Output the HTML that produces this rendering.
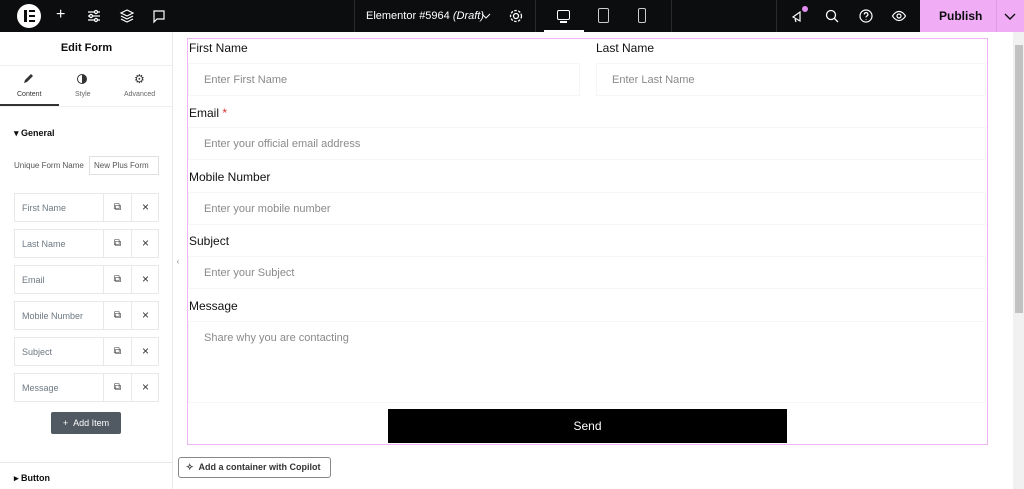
<!DOCTYPE html><html><head><style>
*{box-sizing:border-box;margin:0;padding:0}
body{width:1024px;height:489px;overflow:hidden;font-family:"Liberation Sans",sans-serif;background:#fff;position:relative}
.top{position:absolute;left:0;top:0;width:1024px;height:32px;background:#0c0d0e;color:#fff}
.ab{position:absolute}
.side{position:absolute;left:0;top:32px;width:173px;height:457px;background:#fff;border-right:1px solid #e6e8ea}
.row{position:absolute;left:14px;width:145px;height:29px;border:1px solid #e6e8ea;font-size:9px;color:#6d7882}
.row span{position:absolute;left:7px;top:9px}
.row .c1{position:absolute;left:88px;top:0;width:28px;height:27px;border-left:1px solid #e6e8ea;text-align:center;line-height:27px;font-size:10px;color:#333}
.row .c2{position:absolute;left:116px;top:0;width:28px;height:27px;border-left:1px solid #e6e8ea;text-align:center;line-height:27px;font-size:12px;color:#333}
.lbl{position:absolute;font-size:12px;color:#111}
.inp{position:absolute;height:33px;border:1px solid #f6f6f6;font-size:11px;color:#8a8a8a;padding:10px 0 0 15px}
</style></head><body>
<div class="top">
<div class="ab" style="left:17px;top:4px;width:24px;height:24px;border-radius:50%;background:#fff"></div>
<div class="ab" style="left:24px;top:10px;width:3px;height:12px;background:#0c0d0e"></div>
<div class="ab" style="left:29px;top:10px;width:6px;height:2px;background:#0c0d0e;box-shadow:0 5px 0 #0c0d0e,0 10px 0 #0c0d0e"></div>
<div class="ab" style="left:56px;top:6px;font-size:16px">+</div>
<svg class="ab" style="left:86px;top:8px" width="16" height="16" fill="none" stroke="#fff" stroke-width="1.2"><path d="M2 4h12M2 8h12M2 12h12"/><circle cx="10" cy="4" r="1.5" fill="#0c0d0e"/><circle cx="5" cy="8" r="1.5" fill="#0c0d0e"/><circle cx="10" cy="12" r="1.5" fill="#0c0d0e"/></svg>
<svg class="ab" style="left:119px;top:8px" width="16" height="16" fill="none" stroke="#fff" stroke-width="1.2"><path d="M8 2l6 3-6 3-6-3zM2 8l6 3 6-3M2 11l6 3 6-3"/></svg>
<svg class="ab" style="left:151px;top:8px" width="16" height="16" fill="none" stroke="#fff" stroke-width="1.2"><path d="M3 3h10v8H6l-3 3z"/></svg>
<div class="ab" style="left:354px;top:0;width:1px;height:32px;background:#2a2b2c"></div>
<div class="ab" style="left:366px;top:10px;font-size:11px">Elementor #5964 <i>(Draft)</i></div>
<svg class="ab" style="left:481px;top:11px" width="10" height="10" fill="none" stroke="#fff" stroke-width="1"><path d="M1 3l4 4 4-4"/></svg>
<svg class="ab" style="left:508px;top:8px" width="16" height="16" fill="none" stroke="#fff" stroke-width="1.3"><circle cx="8" cy="8" r="2.5"/><circle cx="8" cy="8" r="5.5" stroke-dasharray="2.5 1.5"/></svg>
<div class="ab" style="left:535px;top:0;width:1px;height:32px;background:#2a2b2c"></div>
<div class="ab" style="left:544px;top:30px;width:40px;height:2px;background:#fff"></div>
<div class="ab" style="left:557px;top:10px;width:13px;height:10px;border:1.3px solid #fff;border-radius:2px"></div>
<div class="ab" style="left:560px;top:21px;width:7px;height:2px;background:#fff"></div>
<div class="ab" style="left:598px;top:8px;width:11px;height:15px;border:1.3px solid #ccc;border-radius:2px"></div>
<div class="ab" style="left:638px;top:8px;width:8px;height:15px;border:1.3px solid #ccc;border-radius:2px"></div>
<div class="ab" style="left:671px;top:0;width:1px;height:32px;background:#2a2b2c"></div>
<div class="ab" style="left:776px;top:0;width:1px;height:32px;background:#2a2b2c"></div>
<svg class="ab" style="left:790px;top:8px" width="16" height="16" fill="none" stroke="#fff" stroke-width="1.2"><path d="M3 9l7-5v9zM5 11l1 3"/></svg>
<div class="ab" style="left:802px;top:6px;width:6px;height:6px;border-radius:50%;background:#e08cf0"></div>
<svg class="ab" style="left:824px;top:8px" width="16" height="16" fill="none" stroke="#fff" stroke-width="1.3"><circle cx="7" cy="7" r="4.5"/><path d="M10.5 10.5l3.5 3.5"/></svg>
<svg class="ab" style="left:858px;top:8px" width="16" height="16" fill="none" stroke="#fff" stroke-width="1.2"><circle cx="8" cy="8" r="6"/><path d="M6.3 6.5a1.8 1.8 0 1 1 2.4 1.6c-.6.3-.7.6-.7 1.3M8 11v.6"/></svg>
<svg class="ab" style="left:891px;top:8px" width="16" height="16" fill="none" stroke="#fff" stroke-width="1.2"><path d="M1.5 8s2.5-4.5 6.5-4.5S14.5 8 14.5 8 12 12.5 8 12.5 1.5 8 1.5 8z"/><circle cx="8" cy="8" r="2"/></svg>
<div class="ab" style="left:920px;top:0;width:104px;height:32px;background:#f0acf5"></div>
<div class="ab" style="left:939px;top:9px;font-size:12px;font-weight:bold;color:#0c0d0e">Publish</div>
<div class="ab" style="left:996px;top:0;width:1px;height:32px;background:#e29ae8"></div>
<svg class="ab" style="left:1003px;top:10px" width="14" height="12" fill="none" stroke="#0c0d0e" stroke-width="1.4"><path d="M2 4l5 5 5-5"/></svg>
</div>
<div class="side">
<div class="ab" style="left:0;top:10px;width:173px;text-align:center;font-size:11px;font-weight:bold;color:#0c0d0e">Edit Form</div>
<div class="ab" style="left:0;top:33px;width:173px;height:1px;background:#eee"></div>
<svg class="ab" style="left:23px;top:41px" width="11" height="11"><path d="M1 10l1-3 6-6 2 2-6 6z" fill="#333"/></svg>
<div class="ab" style="left:77px;top:42px;width:10px;height:10px;border-radius:50%;border:1.5px solid #333;background:linear-gradient(90deg,#fff 50%,#333 50%)"></div>
<div class="ab" style="left:134px;top:40px;font-size:12px;color:#333">⚙</div>
<div class="ab" style="left:17px;top:59px;font-size:7px;color:#333">Content</div>
<div class="ab" style="left:75px;top:59px;font-size:7px;color:#666">Style</div>
<div class="ab" style="left:124px;top:59px;font-size:7px;color:#666">Advanced</div>
<div class="ab" style="left:0;top:72px;width:59px;height:2px;background:#333"></div>
<div class="ab" style="left:0;top:74px;width:173px;height:1px;background:#eee"></div>
<div class="ab" style="left:14px;top:96px;font-size:9px;font-weight:bold;color:#0c0d0e">▾ General</div>
<div class="ab" style="left:14px;top:129px;font-size:8px;color:#555">Unique Form Name</div>
<div class="ab" style="left:89px;top:124px;width:70px;height:19px;border:1px solid #e0e0e0;font-size:8px;color:#555;padding:4px 0 0 4px">New Plus Form</div>
</div>
<div class="row" style="top:193px"><span>First Name</span><div class="c1">⧉</div><div class="c2">×</div></div>
<div class="row" style="top:229px"><span>Last Name</span><div class="c1">⧉</div><div class="c2">×</div></div>
<div class="row" style="top:265px"><span>Email</span><div class="c1">⧉</div><div class="c2">×</div></div>
<div class="row" style="top:301px"><span>Mobile Number</span><div class="c1">⧉</div><div class="c2">×</div></div>
<div class="row" style="top:337px"><span>Subject</span><div class="c1">⧉</div><div class="c2">×</div></div>
<div class="row" style="top:373px"><span>Message</span><div class="c1">⧉</div><div class="c2">×</div></div>
<div class="ab" style="left:51px;top:412px;width:70px;height:22px;background:#515962;border-radius:2px;color:#fff;font-size:9px;text-align:center;line-height:22px">+ &nbsp;Add Item</div>
<div class="ab" style="left:0;top:462px;width:173px;height:1px;background:#e6e8ea"></div>
<div class="ab" style="left:14px;top:473px;font-size:9px;font-weight:bold;color:#0c0d0e">▸ Button</div>
<div class="ab" style="left:173px;top:244px;width:10px;height:36px;background:#fff;font-size:8px;color:#888;line-height:36px;text-align:center">‹</div>
<div class="ab" style="left:187px;top:38px;width:801px;height:407px;border:1px solid #f0b4f5"></div>
<div class="lbl" style="left:189px;top:41px">First Name</div>
<div class="lbl" style="left:596px;top:41px">Last Name</div>
<div class="inp" style="left:188px;top:63px;width:392px">Enter First Name</div>
<div class="inp" style="left:596px;top:63px;width:390px">Enter Last Name</div>
<div class="lbl" style="left:189px;top:106px">Email <span style="color:#d33">*</span></div>
<div class="inp" style="left:188px;top:127px;width:798px">Enter your official email address</div>
<div class="lbl" style="left:189px;top:170px">Mobile Number</div>
<div class="inp" style="left:188px;top:192px;width:798px">Enter your mobile number</div>
<div class="lbl" style="left:189px;top:234px">Subject</div>
<div class="inp" style="left:188px;top:256px;width:798px">Enter your Subject</div>
<div class="lbl" style="left:189px;top:299px">Message</div>
<div class="inp" style="left:188px;top:321px;width:798px;height:82px">Share why you are contacting</div>
<div class="ab" style="left:388px;top:409px;width:399px;height:34px;background:#000;color:#fff;font-size:12px;text-align:center;line-height:35px">Send</div>
<div class="ab" style="left:178px;top:457px;width:153px;height:21px;border:1px solid #888;border-radius:3px;font-size:9px;color:#333;padding:4px 0 0 7px;font-weight:bold">✧ &nbsp;Add a container with Copilot</div>
<div class="ab" style="left:1013px;top:32px;width:11px;height:457px;background:#f1f1f1"></div>
<div class="ab" style="left:1015px;top:45px;width:8px;height:268px;background:#c1c1c1"></div>
</body></html>
